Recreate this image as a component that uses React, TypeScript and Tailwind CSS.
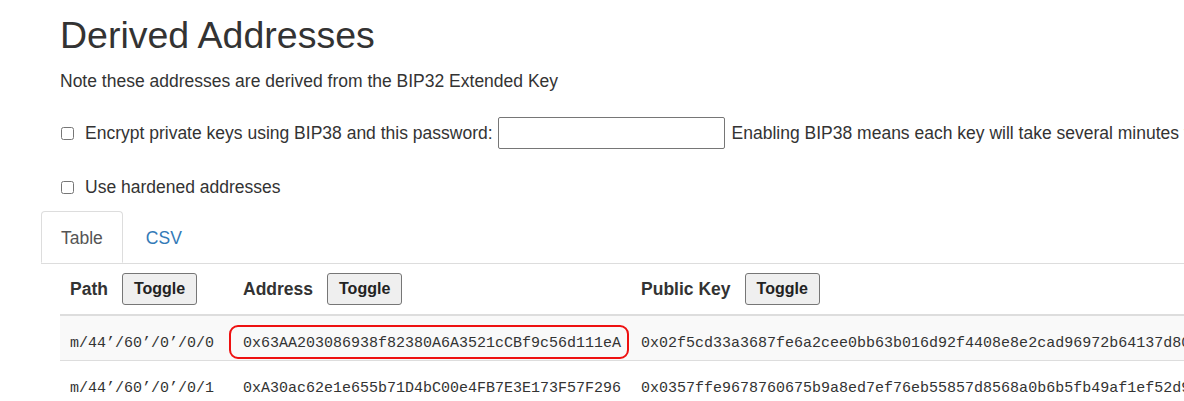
import React from 'react';

interface AddressRow {
  path: string;
  address: string;
  pubkey: string;
  highlight?: boolean;
}

const rows: AddressRow[] = [
  {
    path: 'm/44’/60’/0’/0/0',
    address: '0x63AA203086938f82380A6A3521cCBf9c56d111eA',
    pubkey: '0x02f5cd33a3687fe6a2cee0bb63b016d92f4408e8e2cad96972b64137d80c1f2a9e',
    highlight: true,
  },
  {
    path: 'm/44’/60’/0’/0/1',
    address: '0xA30ac62e1e655b71D4bC00e4FB7E3E173F57F296',
    pubkey: '0x0357ffe9678760675b9a8ed7ef76eb55857d8568a0b6b5fb49af1ef52d94b07c3e',
  },
];

const ToggleButton = () => (
  <button className="ml-[14px] h-[32px] px-[11px] border border-[#767676] rounded-[3px] bg-[#efefef] text-[16px] font-bold text-[#222]">
    Toggle
  </button>
);

const App: React.FC = () => {
  return (
    <div className="w-[1184px] h-[401px] overflow-hidden bg-white text-[#333] font-['Liberation_Sans',Arial,sans-serif]">
      <div className="pl-[60px]">
        <h1 className="pt-[15px] text-[37.5px] leading-[1.1] font-normal">Derived Addresses</h1>
        <p className="mt-[13px] text-[17.5px] leading-[24px]">
          Note these addresses are derived from the BIP32 Extended Key
        </p>

        {/* bip38 */}
        <div className="mt-[24px] flex items-center h-[32px] text-[17.5px] whitespace-nowrap">
          <input type="checkbox" className="m-0 ml-[1px] w-[13px] h-[13px]" />
          <span className="ml-[11px]">Encrypt private keys using BIP38 and this password:</span>
          <input
            type="text"
            className="ml-[5px] w-[227px] h-[32px] border border-[#767676] rounded-[2px] shrink-0"
          />
          <span className="ml-[7px]">
            Enabling BIP38 means each key will take several minutes to generate.
          </span>
        </div>

        <div className="mt-[26px] flex items-center h-[24px] text-[17.5px]">
          <input type="checkbox" className="m-0 ml-[1px] w-[13px] h-[13px]" />
          <span className="ml-[11px]">Use hardened addresses</span>
        </div>
      </div>

      {/* tabs */}
      <div className="mt-[12px] ml-[41px] flex border-b border-[#ddd] text-[17.5px]">
        <div className="-mb-px h-[52px] pt-[2px] px-[19px] flex items-center border border-[#ddd] border-b-white rounded-t-[4px] bg-white text-[#555]">
          Table
        </div>
        <div className="h-[52px] pt-[2px] px-[23px] flex items-center text-[#337ab7]">CSV</div>
      </div>

      {/* table */}
      <table className="ml-[60px] border-collapse whitespace-nowrap text-left">
        <thead>
          <tr className="h-[51px] border-b-2 border-[#ddd]">
            <th className="px-[10px] text-[17.5px] font-bold">
              <div className="w-[153px] flex items-center">
                Path
                <ToggleButton />
              </div>
            </th>
            <th className="px-[10px] text-[17.5px] font-bold">
              <div className="w-[378px] flex items-center">
                Address
                <ToggleButton />
              </div>
            </th>
            <th className="px-[10px] text-[17.5px] font-bold">
              <div className="flex items-center">
                Public Key
                <ToggleButton />
              </div>
            </th>
          </tr>
        </thead>
        <tbody className="font-['Liberation_Mono','Courier_New',monospace] text-[15px] text-[#333]">
          {rows.map((row, i) => (
            <tr
              key={row.path}
              className={`h-[45px] border-t border-[#ddd] ${i % 2 === 0 ? 'bg-[#f9f9f9]' : 'bg-white'}`}
            >
              <td className="px-[10px] pt-[12px]">{row.path}</td>
              <td className="relative px-[10px] pt-[12px]">
                {row.address}
                {row.highlight && (
                  <span className="absolute left-[-4px] top-[9px] w-[400px] h-[34px] border-2 border-[#ee1111] rounded-[9px]" />
                )}
              </td>
              <td className="px-[10px] pt-[12px]">{row.pubkey}</td>
            </tr>
          ))}
        </tbody>
      </table>
    </div>
  );
};

export default App;
